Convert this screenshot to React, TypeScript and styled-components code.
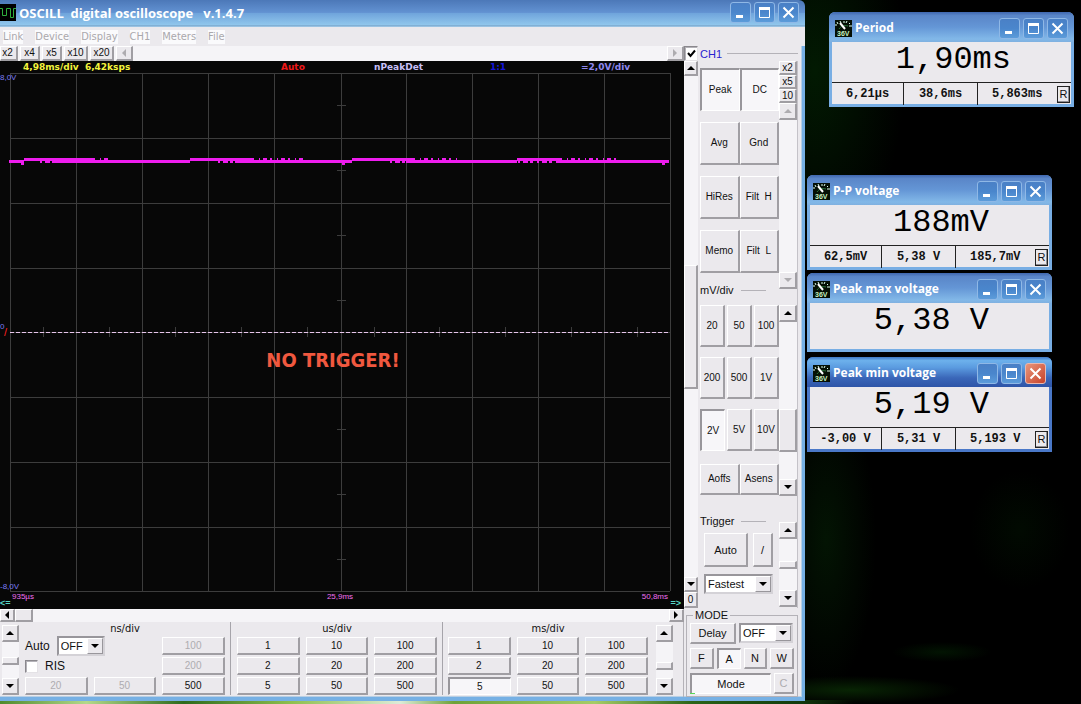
import React from "react";
import styled, { createGlobalStyle, css } from "styled-components";

const ui = `"Liberation Sans", Arial, sans-serif`;
const tahoma = `"DejaVu Sans Condensed", "DejaVu Sans", sans-serif`;
const verdana = `"DejaVu Sans", Verdana, sans-serif`;
const mono = `"Liberation Mono", "Courier New", monospace`;
const face = "#ebe9ed";
const track = "#f5f4f7";

const GlobalStyle = createGlobalStyle`
  * { box-sizing: border-box; }
  body { margin: 0; background: #000; font: 11px/14px ${ui}; color: #111; }
  button, select, input { font: inherit; color: inherit; margin: 0; }
  h1, h2 { margin: 0; }
`;

const Desktop = styled.div`
  display: flex;
  min-height: 100vh;
  align-items: flex-start;
  overflow: hidden;
  background:
    linear-gradient(90deg, #4f8a2c 0, #b3d98a 8%, #2e6a1c 17%, #8fc04e 27%, #dcebd8 37%, #6ea238 42%, #a5cc66 55%, #2b6418 64%, #123a0c 74%, transparent 79%) bottom / 100% 4px no-repeat,
    radial-gradient(ellipse 110px 14px at 850px 690px, #082404, transparent),
    radial-gradient(ellipse 50px 10px at 942px 652px, #021402, transparent),
    radial-gradient(ellipse 50px 150px at 826px 540px, #031403, transparent),
    radial-gradient(ellipse 90px 190px at 815px 70px, #021a02, transparent),
    radial-gradient(ellipse 50px 60px at 1020px 530px, #010a01, transparent),
    #000;
`;

const MainWindow = styled.main`
  flex: 1;
  min-width: 640px;
  min-height: calc(100vh - 3px);
  display: flex;
  flex-direction: column;
  border-radius: 0 6px 0 0;
  overflow: hidden;
`;

const TitleBar = styled.header<{ $main?: boolean; $active?: boolean }>`
  display: flex;
  align-items: center;
  gap: 3px;
  height: ${(p) => (p.$main ? 27 : 30)}px;
  padding: ${(p) => (p.$main ? "0 6px 2px 0" : "2px 6px 0 6px")};
  border-radius: ${(p) => (p.$main ? "0" : "6px 6px 0 0")};
  color: #fff;
  background: ${(p) =>
    p.$active
      ? "linear-gradient(#3f78c4 0, #6db1ec 12%, #5b9be0 35%, #3a66b8 70%, #2e55a8 100%)"
      : p.$main
        ? "linear-gradient(#4c78b8 0, #6292d2 46%, #70a5dc 50%, #90c6ec 92%, #78a9d0 93%, #a6cbe8 100%)"
        : "linear-gradient(#3f66ae 0, #5a86c8 12%, #6496d6 50%, #82b8e8 90%, #7fb0e0 100%)"};
`;

const Title = styled.h1<{ $small?: boolean }>`
  flex: 1;
  font: bold ${(p) => (p.$small ? 12 : 13)}px/16px "Open Sans", "Noto Sans", sans-serif;
  white-space: pre;
`;

const CaptionButton = styled.button<{ $danger?: boolean }>`
  display: grid;
  place-items: center;
  width: 21px;
  height: 21px;
  padding: 0;
  border: 1px solid ${(p) => (p.$danger ? "#e8b8b0" : "#8fb8e6")};
  border-radius: 3px;
  background: ${(p) =>
    p.$danger ? "linear-gradient(135deg, #e8967c, #c8432a)" : "linear-gradient(#4a80c6, #4a86cc 50%, #5c9cda)"};
  svg { display: block; }
`;

const Captions = ({ danger }: { danger?: boolean }) => (
  <>
    <CaptionButton aria-label="Minimize">
      <svg width="17" height="17"><path d="M4 12.500h7" stroke="#fff" strokeWidth="3" /></svg>
    </CaptionButton>
    <CaptionButton aria-label="Maximize">
      <svg width="17" height="17" fill="none" stroke="#fff"><path d="M3.500 4v9.500h10V4" /><path d="M3 4.500h11" strokeWidth="3" /></svg>
    </CaptionButton>
    <CaptionButton aria-label="Close" $danger={danger}>
      <svg width="17" height="17"><path d="M3.500 3.500l10 10M13.500 3.500l-10 10" stroke="#fff" strokeWidth="2" /></svg>
    </CaptionButton>
  </>
);

const MenuBar = styled.nav`
  display: flex;
  align-items: center;
  gap: 12px;
  height: 19px;
  padding-left: 3px;
  background: ${face};
  font: 11px/14px ${tahoma};
  a { color: #aaa8ac; text-decoration: none; background: #fafafc; }
`;

const Frame = styled.div`
  flex: 1;
  display: flex;
  flex-direction: column;
  background: ${face};
  border: solid #76b0e4;
  border-width: 0 3px 4px 0;
  box-shadow: inset -1px -1px #b8cfe4;
`;

const Body = styled.div`
  flex: 1;
  display: grid;
  grid-template-columns: minmax(0, 1fr) 118px;
`;

const LeftPane = styled.div`
  display: flex;
  flex-direction: column;
`;

const RightPane = styled.div`
  display: flex;
  flex-direction: column;
`;

const ToolButton = styled.button<{ $down?: boolean; $h?: number; $large?: boolean }>`
  display: grid;
  place-items: center;
  min-width: 0;
  height: ${(p) => (p.$h ? `${p.$h}px` : "auto")};
  padding: 0;
  background: ${face};
  font-size: ${(p) => (p.$large ? 11 : 10)}px;
  line-height: 12px;
  white-space: pre;
  border: solid;
  border-width: 1px 2px 2px 1px;
  border-color: #fff #a09ea3 #a09ea3 #fff;
  &:disabled { color: #aeacb0; }
  ${(p) =>
    p.$down &&
    css`
      background: #f7f6f9;
      border-width: 2px 1px 1px 2px;
      border-color: #98969b #fff #fff #98969b;
    `}
`;

const ZoomBar = styled.div`
  display: flex;
  gap: 2px;
  height: 15px;
  background: ${track};
  ${ToolButton} { width: 20px; }
  ${ToolButton}.wide { width: 24px; }
  ${ToolButton}.first { width: 18px; padding-right: 2px; }
  ${ToolButton}.prev { width: 17px; }
  ${ToolButton}.last { width: 17px; margin-left: auto; }
`;

type Dir = "up" | "down" | "left" | "right";
const arrows: Record<Dir, string> = {
  up: "M0 6h8L4 2z",
  down: "M0 2h8L4 6z",
  left: "M6 0v8L2 4z",
  right: "M2 0v8l4-4z",
};
const Arrow = ({ dir, off }: { dir: Dir; off?: boolean }) => (
  <svg width="8" height="8" aria-hidden="true"><path d={arrows[dir]} fill={off ? "#aeacb0" : "#000"} /></svg>
);

const Bar = styled.div<{ $w: number }>`
  display: flex;
  flex-direction: column;
  width: ${(p) => p.$w}px;
  background: ${track};
`;
const Space = styled.div<{ $grow: number }>`
  flex: ${(p) => p.$grow} 1 0;
`;
const Thumb = styled.div<{ $size: number }>`
  flex: none;
  height: ${(p) => p.$size}px;
  background: ${face};
  border: solid;
  border-width: 1px 2px 2px 1px;
  border-color: #fff #a09ea3 #a09ea3 #fff;
`;

const VScroll = ({ width = 17, before = 1, after = 1, thumb = 0, off, cap = 17 }: {
  width?: number; before?: number; after?: number; thumb?: number; off?: boolean; cap?: number;
}) => (
  <Bar $w={width} className="bar">
    <ToolButton $h={cap} disabled={off} aria-label="Scroll up"><Arrow dir="up" off={off} /></ToolButton>
    <Space $grow={before} />
    {thumb > 0 && <Thumb $size={thumb} />}
    <Space $grow={after} />
    <ToolButton $h={cap} disabled={off} aria-label="Scroll down"><Arrow dir="down" off={off} /></ToolButton>
  </Bar>
);

const Screen = styled.section`
  flex: 1;
  display: flex;
  flex-direction: column;
  overflow: hidden;
  background: #070707;
`;
const Readouts = styled.div`
  display: grid;
  grid-template-columns: 258fr 93fr 116fr 91fr 103fr;
  height: 12px;
  padding-left: 23px;
  font: bold 9px/12px ${verdana};
  white-space: pre;
`;
const Ink = styled.span<{ $c: string }>`
  color: ${(p) => p.$c};
`;
const Plot = styled.div`
  position: relative;
  flex: 1;
  svg { position: absolute; inset: 0; width: 100%; height: 100%; }
`;
const AxisMark = styled.span<{ $top: string; $c: string; $left: number }>`
  position: absolute;
  top: ${(p) => p.$top};
  left: ${(p) => p.$left}px;
  font-size: 8px;
  line-height: 10px;
  color: ${(p) => p.$c};
`;
const TriggerMark = styled(AxisMark)`
  font-size: 11px;
`;
const Warning = styled.strong`
  position: absolute;
  top: 53%;
  left: 0;
  right: 18px;
  text-align: center;
  font: bold 20px/24px ${tahoma};
  color: #f0583f;
`;
const TimeMarks = styled.div`
  display: grid;
  grid-template-columns: 1fr auto 1fr;
  height: 9px;
  padding: 0 16px 0 12px;
  font-size: 8px;
  line-height: 10px;
  color: #f070f0;
  span:last-child { text-align: right; }
`;
const PageMarks = styled.div`
  display: flex;
  justify-content: space-between;
  height: 8px;
  padding: 0 3px 0 0;
  font: bold 9px/4px ${ui};
  color: #58d8c8;
`;

const HScroll = styled.div`
  display: flex;
  height: 13px;
  background: ${track};
  ${ToolButton} { width: 15px; }
  ${Thumb} { width: 18px; }
  ${ToolButton}:last-child { margin-left: auto; }
`;

const TimePanel = styled.section`
  display: flex;
  height: 75px;
  padding: 0 10px 2px 2px;
  border-right: 1px solid #b4b2b8;
  .bar { margin-top: 3px; height: 70px; }
`;
const TimeGroup = styled.div<{ $line?: boolean }>`
  flex: 1;
  display: grid;
  grid-template-columns: repeat(3, 1fr);
  grid-template-rows: 13px repeat(3, 18px);
  gap: 2px 6px;
  padding: ${(p) => (p.$line ? "0 5px 0 6px" : "0 8px 0 5px")};
  border-right: ${(p) => (p.$line ? "1px solid #a6a4aa" : "0")};
  h2 { grid-column: 1 / -1; text-align: center; font: 11px/13px ${tahoma}; }
`;
const Option = styled.div`
  grid-column: span 2;
  display: flex;
  align-items: center;
  gap: 7px;
  label { font-size: 12px; }
`;
const Check = styled.input`
  appearance: none;
  width: 13px;
  height: 13px;
  background: #fff;
  border: 1px solid;
  border-color: #8a888d #e4e2e6 #e4e2e6 #8a888d;
  box-shadow: inset 1px 1px #b4b2b8;
  &:checked {
    background: #fff url("data:image/svg+xml,%3Csvg xmlns='http://www.w3.org/2000/svg' width='11' height='11'%3E%3Cpath d='M2 5l2.500 3L9 2.500' fill='none' stroke='%23000' stroke-width='2'/%3E%3C/svg%3E") center no-repeat;
  }
`;

const SelectBox = styled.span<{ $w: number }>`
  display: grid;
  width: ${(p) => p.$w}px;
  height: 20px;
  background: #fff;
  border: 2px solid;
  border-color: #98969b #d4d2d7 #d4d2d7 #98969b;
  > * { grid-area: 1 / 1; }
  select { appearance: none; border: 0; padding: 0 2px; background: none; width: 100%; font-size: 11px; line-height: 14px; outline: 0; }
`;
const Drop = styled.span`
  justify-self: end;
  display: grid;
  place-items: center;
  width: 16px;
  pointer-events: none;
  background: ${face};
  border: 1px solid;
  border-color: #fff #98969b #98969b #fff;
`;
const Select = ({ id, label, value, width }: { id: string; label: string; value: string; width: number }) => (
  <SelectBox $w={width}>
    <select id={id} aria-label={label} defaultValue={value}><option>{value}</option></select>
    <Drop><Arrow dir="down" /></Drop>
  </SelectBox>
);

const Channel = styled.section`
  flex: 1;
  display: grid;
  grid-template-columns: 14px 1fr;
`;
const LevelColumn = styled.div`
  display: flex;
  flex-direction: column;
  .bar { flex: 1; }
  ${Check} { height: 15px; width: 14px; }
`;
const ChannelPanel = styled.div`
  display: flex;
  flex-direction: column;
  padding-left: 2px;
`;
const Legend = styled.h2<{ $c?: string; $short?: boolean }>`
  display: flex;
  align-items: center;
  gap: 5px;
  height: ${(p) => (p.$short ? 14 : 15)}px;
  font: 11px/14px ${ui};
  color: ${(p) => p.$c || "#111"};
  &::after { content: ""; flex: ${(p) => (p.$short ? "0 1 25px" : "1")}; margin: 0 ${(p) => (p.$short ? 13 : 4)}px 0 auto; height: 1px; background: #b4b2b8; }
`;
const ChannelBody = styled.div`
  flex: 1;
  display: grid;
  grid-template-columns: 79px 18px;
  border-right: 1px solid #c4c2c8;
  margin-right: 4px;
`;
const Stack = styled.div`
  display: flex;
  flex-direction: column;
  padding-bottom: 1px;
`;
const Pair = styled.div`
  display: grid;
  grid-template-columns: 1fr 1fr;
  grid-auto-rows: 43px;
  row-gap: 11px;
  margin: 7px 0 10px;
`;
const Triple = styled.div`
  display: grid;
  grid-template-columns: repeat(3, 1fr);
  grid-auto-rows: 42px;
  gap: 10px 2px;
  margin: 8px 0 13px;
`;
const OffsetPair = styled.div`
  display: grid;
  grid-template-columns: 1fr 1fr;
  grid-auto-rows: 31px;
  margin-bottom: 19px;
`;
const TriggerRow = styled.div`
  display: grid;
  grid-template-columns: 44px 20px;
  grid-auto-rows: 34px;
  gap: 5px;
  margin: 5px 0 7px 4px;
`;
const TriggerSelect = styled.div`
  padding-left: 4px;
`;
const ScrollSlot = styled.div<{ $h?: number; $gap: number }>`
  display: flex;
  ${(p) => (p.$h ? `height: ${p.$h}px;` : "flex: 1;")}
  margin-bottom: ${(p) => p.$gap}px;
`;

const ModeBox = styled.fieldset`
  position: relative;
  display: flex;
  flex-direction: column;
  gap: 4px;
  height: 88px;
  min-width: 0;
  margin: 1px 4px 0 2px;
  padding: 2px 3px 0 3px;
  border: 1px solid #b4b2b8;
  legend { margin-left: 3px; padding: 0 2px; font-size: 11px; line-height: 12px; }
`;
const ModeRow = styled.div<{ $cols: string }>`
  display: grid;
  grid-template-columns: ${(p) => p.$cols};
  grid-auto-rows: 21px;
  gap: 3px;
`;
const Led = styled.span`
  position: absolute;
  left: 3px;
  bottom: 0;
  width: 5px;
  height: 1px;
  background: #58d858;
`;

const Meters = styled.aside`
  width: 276px;
  display: flex;
  flex-direction: column;
  align-items: flex-start;
  padding: 12px 0 0 2px;
`;
const MeterWindow = styled.section<{ $indent?: boolean; $gap: number; $active?: boolean }>`
  width: 245px;
  margin: 0 0 ${(p) => p.$gap}px ${(p) => (p.$indent ? 22 : 0)}px;
  border-radius: 6px 6px 0 0;
  background: ${(p) => (p.$active ? "#4a78c8" : "#78aee4")};
`;
const MeterFace = styled.div`
  margin: 0 3px;
  border-bottom: 3px solid transparent;
`;
const Big = styled.output<{ $tall?: boolean }>`
  display: block;
  height: ${(p) => (p.$tall ? 46 : 40)}px;
  padding-right: 60px;
  background: ${face};
  font: 32px/36px ${mono};
  text-align: right;
  white-space: pre;
  color: #000;
`;
const Stats = styled.div`
  display: grid;
  grid-template-columns: 72px 74px 1fr;
  height: 22px;
  background: ${face};
  border-top: 1px solid #222;
  font: bold 12px/22px ${mono};
  text-align: center;
  > span { border-right: 1px solid #222; }
  > div { display: flex; align-items: center; justify-content: space-between; padding: 0 1px 0 14px; }
`;
const Reset = styled.button`
  width: 13px;
  height: 17px;
  padding: 0;
  border: 1px solid #222;
  box-shadow: inset -1px -1px #908e93;
  background: ${face};
  font: 11px/15px ${ui};
`;

const MeterIcon = () => (
  <svg width="17" height="17" viewBox="0 0 17 17" aria-hidden="true">
    <rect width="17" height="17" fill="#051005" />
    <path d="M4 9c2-3 5-4 9-3" stroke="#2c7a3c" fill="none" />
    <path d="M0 5h2M2 2l1 2M5 1l1 2M9 1v2M12 1l-1 2M15 3l-1 1M14 6h3" stroke="#dfe" strokeWidth="1" />
    <path d="M5 3l5 6" stroke="#fff" strokeWidth="2" />
    <text x="2" y="16" fontSize="7" fontWeight="bold" fontFamily="Liberation Sans" fill="#c8f0c0">36V</text>
  </svg>
);

const Meter = ({ title, value, stats, active, indent, gap }: {
  title: string; value: string; stats?: string[]; active?: boolean; indent?: boolean; gap: number;
}) => (
  <MeterWindow $indent={indent} $gap={gap} $active={active}>
    <TitleBar $active={active}>
      <MeterIcon />
      <Title as="h2" $small>{title}</Title>
      <Captions danger={active} />
    </TitleBar>
    <MeterFace>
      <Big $tall={!stats}>{value}</Big>
      {stats && (
        <Stats>
          <span>{stats[0]}</span>
          <span>{stats[1]}</span>
          <div>{stats[2]}<Reset>R</Reset></div>
        </Stats>
      )}
    </MeterFace>
  </MeterWindow>
);

const xs = [10, 76, 142, 208, 274, 341, 406, 472, 538, 604, 670];
const ys = [0, 65, 130, 195, 259, 324, 389, 454, 518];

const Grid = () => (
  <svg viewBox="0 0 684 519" preserveAspectRatio="none" aria-hidden="true">
    <g stroke="#3c3c3c" shapeRendering="crispEdges">
      {xs.map((x) => <path key={x} d={`M${x + 0.5} 0V518`} />)}
      {ys.map((y) => <path key={y} d={`M10 ${y + 0.5}H670`} />)}
      {ys.slice(0, 8).map((y) => <path key={y} d={`M337 ${y + 32.5}h9`} />)}
      {xs.slice(0, 10).map((x) => <path key={x} d={`M${x + 33.5} 254v10`} />)}
    </g>
    <path d="M10 259.500H670" stroke="#e6c4ea" strokeDasharray="4 2" shapeRendering="crispEdges" />
    <g stroke="#ee1cee" shapeRendering="crispEdges">
      <path
        fill="none"
        strokeWidth="3"
        d="M9 88.500H24M24 86.500H93M55 88.500H190M190 86.500H252M235 88.500H352M352 86.500H413M406 88.500H517M517 86.500H560M556 88.500H669"
      />
      <path
        strokeWidth="3"
        strokeDasharray="2 3 5 2 3 4"
        d="M40 88.500H56M218 88.500H236M390 88.500H407M518 88.500H556"
      />
      <path
        strokeWidth="2"
        strokeDasharray="2 5 1 3 4 3"
        d="M93 86H108M252 86H304M413 86H457M560 86H621"
      />
      <path d="M21 91h3M342 91h3M662 91h3" strokeWidth="2" />
    </g>
  </svg>
);

const TimeButtons = ({ unit, start, down }: { unit: string; start?: boolean; down?: string }) => (
  <TimeGroup $line={unit !== "ms/div"}>
    <h2>{unit}</h2>
    {start ? (
      <>
        <Option>
          <label htmlFor="auto">Auto</label>
          <Select id="auto" label="Auto" value="OFF" width={48} />
        </Option>
        <ToolButton disabled>100</ToolButton>
        <Option><Check type="checkbox" id="ris" /><label htmlFor="ris">RIS</label></Option>
        <ToolButton disabled>200</ToolButton>
        <ToolButton disabled>20</ToolButton>
        <ToolButton disabled>50</ToolButton>
        <ToolButton>500</ToolButton>
      </>
    ) : (
      ["1", "10", "100", "2", "20", "200", "5", "50", "500"].map((t) => (
        <ToolButton key={t} $down={t === down}>{t}</ToolButton>
      ))
    )}
  </TimeGroup>
);

export default function App() {
  return (
    <Desktop>
      <GlobalStyle />
      <MainWindow>
        <TitleBar $main>
          <svg width="16" height="17" aria-hidden="true">
            <rect width="16" height="17" fill="#000" />
            <path d="M0 4.500h2.500v7h4v-7h4v9h3v-9H16" stroke="#2fae3c" fill="none" strokeWidth="1" />
          </svg>
          <Title>{"OSCILL  digital oscilloscope   v.1.4.7"}</Title>
          <Captions />
        </TitleBar>
        <MenuBar>
          {["Link", "Device", "Display", "CH1", "Meters", "File"].map((m) => <a key={m} href="#">{m}</a>)}
        </MenuBar>
        <Frame>
          <Body>
            <LeftPane>
              <ZoomBar>
                <ToolButton className="first">x2</ToolButton>
                <ToolButton>x4</ToolButton>
                <ToolButton>x5</ToolButton>
                <ToolButton className="wide">x10</ToolButton>
                <ToolButton className="wide">x20</ToolButton>
                <ToolButton className="prev" disabled aria-label="Previous"><Arrow dir="left" off /></ToolButton>
                <ToolButton className="last" disabled aria-label="Next"><Arrow dir="right" off /></ToolButton>
              </ZoomBar>
              <Screen>
                <Readouts>
                  <Ink $c="#f4f43c">{"4,98ms/div  6,42ksps"}</Ink>
                  <Ink $c="#f01818">Auto</Ink>
                  <Ink $c="#c8c0f8">nPeakDet</Ink>
                  <Ink $c="#1414d8">1:1</Ink>
                  <Ink $c="#9088f0">=2,0V/div</Ink>
                </Readouts>
                <Plot>
                  <Grid />
                  <AxisMark $top="0" $left={0} $c="#7c7cf4">8,0V</AxisMark>
                  <AxisMark $top="48%" $left={0} $c="#7c7cf4">0</AxisMark>
                  <TriggerMark $top="49%" $left={4} $c="#ff2020">/</TriggerMark>
                  <AxisMark $top="98%" $left={0} $c="#7c7cf4">-8,0V</AxisMark>
                  <Warning>NO TRIGGER!</Warning>
                </Plot>
                <TimeMarks><span>935µs</span><span>25,9ms</span><span>50,8ms</span></TimeMarks>
                <PageMarks><span>&lt;=</span><span>=&gt;</span></PageMarks>
              </Screen>
              <HScroll>
                <ToolButton aria-label="Scroll left"><Arrow dir="left" /></ToolButton>
                <Thumb $size={13} />
                <ToolButton aria-label="Scroll right"><Arrow dir="right" /></ToolButton>
              </HScroll>
              <TimePanel>
                <VScroll thumb={8} before={16} after={13} />
                <TimeButtons unit="ns/div" start />
                <TimeButtons unit="us/div" />
                <TimeButtons unit="ms/div" down="5" />
                <VScroll thumb={8} before={21} after={8} />
              </TimePanel>
            </LeftPane>
            <RightPane>
              <Channel>
                <LevelColumn>
                  <Check type="checkbox" id="ch1" defaultChecked />
                  <VScroll width={14} thumb={124} cap={15} />
                  <ToolButton $h={16}>0</ToolButton>
                </LevelColumn>
                <ChannelPanel>
                  <Legend $c="#2a22d0"><label htmlFor="ch1">CH1</label></Legend>
                  <ChannelBody>
                    <Stack>
                      <Pair>
                        <ToolButton $down>Peak</ToolButton>
                        <ToolButton $down>DC</ToolButton>
                        {["Avg", "Gnd", "HiRes", "Filt  H", "Memo", "Filt  L"].map((t) => <ToolButton key={t}>{t}</ToolButton>)}
                      </Pair>
                      <Legend $short>mV/div</Legend>
                      <Triple>
                        {["20", "50", "100", "200", "500", "1V", "2V", "5V", "10V"].map((t) => (
                          <ToolButton key={t} $down={t === "2V"}>{t}</ToolButton>
                        ))}
                      </Triple>
                      <OffsetPair>
                        <ToolButton>Aoffs</ToolButton>
                        <ToolButton>Asens</ToolButton>
                      </OffsetPair>
                      <Legend $short>Trigger</Legend>
                      <TriggerRow>
                        <ToolButton $large>Auto</ToolButton>
                        <ToolButton $large>/</ToolButton>
                      </TriggerRow>
                      <TriggerSelect><Select id="speed" label="Trigger speed" value="Fastest" width={69} /></TriggerSelect>
                    </Stack>
                    <Stack>
                      <ToolButton $h={14}>x2</ToolButton>
                      <ToolButton $h={14}>x5</ToolButton>
                      <ToolButton $h={14}>10</ToolButton>
                      <ScrollSlot $h={186} $gap={16}><VScroll off width={18} /></ScrollSlot>
                      <ScrollSlot $h={191} $gap={26}><VScroll width={18} thumb={43} before={87} after={27} /></ScrollSlot>
                      <ScrollSlot $gap={0}><VScroll width={18} thumb={8} before={22} after={22} /></ScrollSlot>
                    </Stack>
                  </ChannelBody>
                </ChannelPanel>
              </Channel>
              <ModeBox>
                <legend>MODE</legend>
                <ModeRow $cols="46px 1fr">
                  <ToolButton $large>Delay</ToolButton>
                  <Select id="delay" label="Delay" value="OFF" width={54} />
                </ModeRow>
                <ModeRow $cols="repeat(4, 1fr)">
                  <ToolButton $large>F</ToolButton>
                  <ToolButton $large $down>A</ToolButton>
                  <ToolButton $large>N</ToolButton>
                  <ToolButton $large>W</ToolButton>
                </ModeRow>
                <ModeRow $cols="1fr 20px">
                  <ToolButton $large $down>Mode</ToolButton>
                  <ToolButton $large disabled>C</ToolButton>
                </ModeRow>
                <Led />
              </ModeBox>
            </RightPane>
          </Body>
        </Frame>
      </MainWindow>
      <Meters>
        <Meter title="Period" value="1,90ms" stats={["6,21µs", "38,6ms", "5,863ms"]} indent gap={68} />
        <Meter title="P-P voltage" value="188mV" stats={["62,5mV", "5,38 V", "185,7mV"]} gap={3} />
        <Meter title="Peak max voltage" value="5,38 V" gap={5} />
        <Meter title="Peak min voltage" value="5,19 V" stats={["-3,00 V", "5,31 V", "5,193 V"]} active gap={0} />
      </Meters>
    </Desktop>
  );
}
